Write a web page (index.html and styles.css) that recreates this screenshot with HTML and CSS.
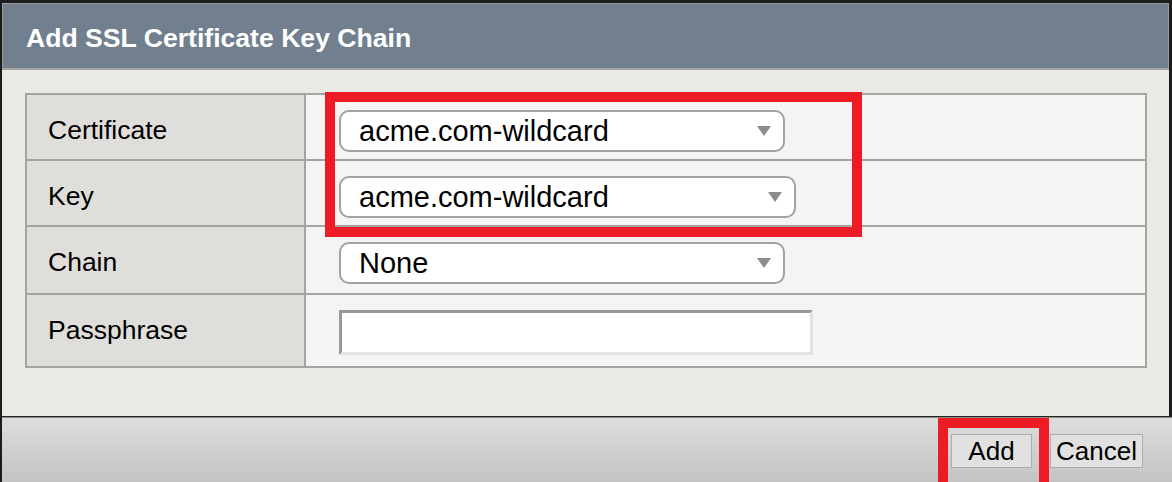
FILE: index.html
```html
<!DOCTYPE html>
<html>
<head>
<meta charset="utf-8">
<title>Add SSL Certificate Key Chain</title>
<link rel="stylesheet" href="styles.css">
</head>
<body>
<div class="dialog">
  <div class="main">
    <div class="header"><h1 class="title">Add SSL Certificate Key Chain</h1></div>
    <div class="content">
      <div class="form-table">
        <div class="row">
          <div class="label">Certificate</div>
          <div class="value">
            <div class="select w446"><span>acme.com-wildcard</span>
              <svg class="caret" width="14" height="10" viewBox="0 0 14 10"><path d="M0 0 H14 L7 10 Z" fill="#8c8c8c"/></svg>
            </div>
          </div>
        </div>
        <div class="row">
          <div class="label">Key</div>
          <div class="value">
            <div class="select w457"><span>acme.com-wildcard</span>
              <svg class="caret" width="14" height="10" viewBox="0 0 14 10"><path d="M0 0 H14 L7 10 Z" fill="#8c8c8c"/></svg>
            </div>
          </div>
        </div>
        <div class="row r3">
          <div class="label">Chain</div>
          <div class="value">
            <div class="select w446"><span>None</span>
              <svg class="caret" width="14" height="10" viewBox="0 0 14 10"><path d="M0 0 H14 L7 10 Z" fill="#8c8c8c"/></svg>
            </div>
          </div>
        </div>
        <div class="row r4 last">
          <div class="label">Passphrase</div>
          <div class="value">
            <div class="text-input"></div>
          </div>
        </div>
      </div>
    </div>
  </div>
  <div class="footer">
    <button class="btn btn-add">Add</button>
    <button class="btn btn-cancel">Cancel</button>
  </div>
</div>
<div class="highlight hl-fields"></div>
<div class="highlight hl-add"></div>
</body>
</html>
```
FILE: styles.css
```css
html, body {
  margin: 0;
  padding: 0;
}
body {
  width: 1172px;
  height: 482px;
  overflow: hidden;
  position: relative;
  background: #1c1c1c;
  font-family: "Liberation Sans", Arial, sans-serif;
}
.dialog {
  box-sizing: border-box;
  height: 482px;
  padding-top: 3px;
  padding-left: 2px;
  background: #1c1c1c;
  display: flex;
  flex-direction: column;
}
.main {
  margin-right: 3px;
}
.header {
  box-sizing: border-box;
  height: 67px;
  border: 1px solid #9a9a9a;
  border-bottom: 2px solid #a6a6a6;
  background: #717f8f;
  padding: 4px 0 0 23px;
}
.title {
  margin: 0;
  font-size: 26.6px;
  line-height: 60px;
  font-weight: bold;
  color: #ffffff;
}
.content {
  box-sizing: border-box;
  height: 346px;
  background: #eae9e4;
  padding: 23px 22px 0 23px;
}
.form-table {
  border: 2px solid #a4a4a4;
  background: #f5f4f2;
}
.row {
  display: grid;
  grid-template-columns: 279px 1fr;
  height: 64px;
  border-bottom: 2px solid #a4a4a4;
}
.row.r3 { height: 66px; }
.row.r4 { height: 71px; }
.row.last { border-bottom: none; }
.label {
  background: #dfdedb;
  border-right: 2px solid #a4a4a4;
  padding: 20px 0 0 21px;
  font-size: 26.5px;
  line-height: 30px;
  color: #000;
}
.value {
  padding: 15px 0 0 33px;
}
.select {
  box-sizing: border-box;
  height: 42px;
  border: 2px solid #a2a2a2;
  border-radius: 10px;
  background: #ffffff;
  display: flex;
  align-items: center;
  justify-content: space-between;
  padding: 0 12px 0 18px;
  font-size: 29px;
  line-height: 38px;
  color: #000;
}
.select.w446 { width: 446px; }
.select.w457 { width: 457px; }
.caret {
  display: block;
}
.text-input {
  box-sizing: border-box;
  width: 474px;
  height: 45px;
  background: #ffffff;
  border: 3px solid;
  border-color: #989898 #e3e3e3 #e3e3e3 #989898;
}
.footer {
  flex: 1;
  box-sizing: border-box;
  border-top: 1px solid #222222;
  box-shadow: inset 0 1px 0 #8e8e8e;
  background: linear-gradient(#dddddd, #c4c4c4);
  display: flex;
  justify-content: flex-end;
  align-items: center;
  gap: 18px;
  padding: 3px 29px 0 0;
}
.btn {
  box-sizing: border-box;
  height: 34px;
  margin: 0;
  padding: 0;
  background: #e1e1e1;
  border: 1px solid #adadad;
  font-family: "Liberation Sans", Arial, sans-serif;
  font-size: 26px;
  line-height: 32px;
  color: #000;
}
.btn-add { width: 81px; }
.btn-cancel { width: 93px; }
.highlight {
  position: absolute;
  box-sizing: border-box;
  border: 10px solid #ed1c24;
}
.hl-fields {
  left: 325px;
  top: 92px;
  width: 537px;
  height: 145px;
}
.hl-add {
  left: 938px;
  top: 418px;
  width: 111px;
  height: 80px;
}
```
